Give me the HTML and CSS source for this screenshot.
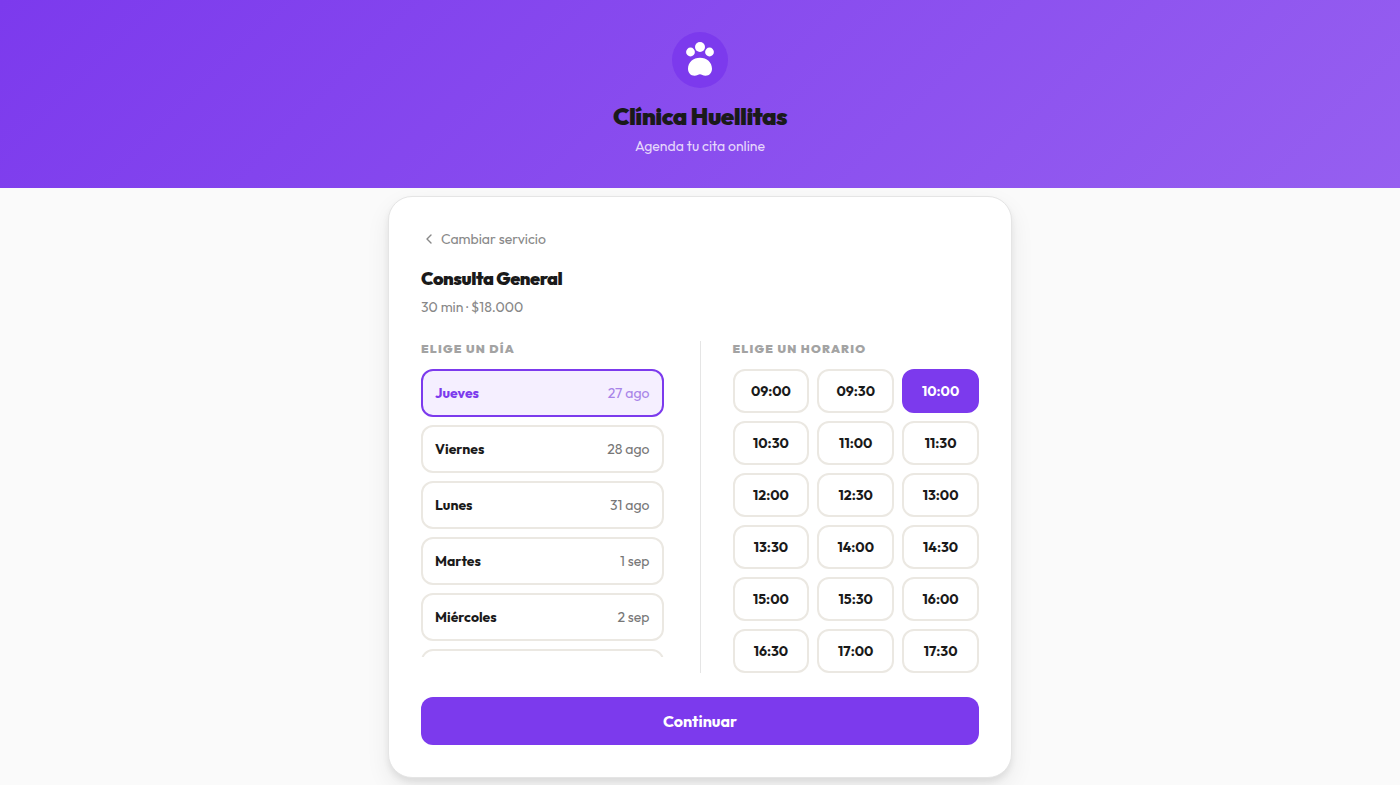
FILE: index.html
```html
<!DOCTYPE html>
<html lang="es">
<head>
<meta charset="UTF-8">
<meta name="viewport" content="width=device-width, initial-scale=1.0">
<title>Clínica Huellitas</title>
<link rel="stylesheet" href="styles.css">
</head>
<body>
<header class="header">
    <svg class="logo" viewBox="0 0 56 56" aria-hidden="true">
        <circle cx="28" cy="28" r="28" fill="#7c3aed"/>
        <g fill="#fff">
            <circle cx="28" cy="15" r="5"/>
            <circle cx="18.5" cy="20" r="4.4"/>
            <circle cx="37.5" cy="20" r="4.4"/>
            <path d="M28 25.8C21.2 25.8 16 30.4 16 36.8C16 41 18.8 43.8 22.4 43.8C25.2 43.8 26.4 42.2 28 42.2C29.6 42.2 30.8 43.8 33.6 43.8C37.2 43.8 40 41 40 36.8C40 30.4 34.8 25.8 28 25.8Z"/>
        </g>
    </svg>
    <h1>Clínica Huellitas</h1>
    <p>Agenda tu cita online</p>
</header>

<main class="page">
    <div class="card">
        <button type="button" class="back">
            <svg viewBox="0 0 16 16" aria-hidden="true"><path d="M10 4L6 8l4 4"/></svg>
            Cambiar servicio
        </button>
        <h2>Consulta General</h2>
        <p class="details">30 min · $18.000</p>

        <div class="columns">
            <section class="days">
                <h3>Elige un día</h3>
                <div class="day-list">
                    <button type="button" class="day selected"><span>Jueves</span><small>27 ago</small></button>
                    <button type="button" class="day"><span>Viernes</span><small>28 ago</small></button>
                    <button type="button" class="day"><span>Lunes</span><small>31 ago</small></button>
                    <button type="button" class="day"><span>Martes</span><small>1 sep</small></button>
                    <button type="button" class="day"><span>Miércoles</span><small>2 sep</small></button>
                    <button type="button" class="day"><span>Jueves</span><small>3 sep</small></button>
                </div>
            </section>
            <div class="divider"></div>
            <section class="times">
                <h3>Elige un horario</h3>
                <div class="time-grid">
                    <button type="button" class="time">09:00</button>
                    <button type="button" class="time">09:30</button>
                    <button type="button" class="time selected">10:00</button>
                    <button type="button" class="time">10:30</button>
                    <button type="button" class="time">11:00</button>
                    <button type="button" class="time">11:30</button>
                    <button type="button" class="time">12:00</button>
                    <button type="button" class="time">12:30</button>
                    <button type="button" class="time">13:00</button>
                    <button type="button" class="time">13:30</button>
                    <button type="button" class="time">14:00</button>
                    <button type="button" class="time">14:30</button>
                    <button type="button" class="time">15:00</button>
                    <button type="button" class="time">15:30</button>
                    <button type="button" class="time">16:00</button>
                    <button type="button" class="time">16:30</button>
                    <button type="button" class="time">17:00</button>
                    <button type="button" class="time">17:30</button>
                </div>
            </section>
        </div>

        <button type="button" class="continue">Continuar</button>
    </div>
</main>

<script>
    // only one day and one time can be selected
    function selectable(selector) {
        let items = document.querySelectorAll(selector);
        items.forEach((item) => {
            item.onclick = () => {
                items.forEach((other) => other.classList.remove("selected"));
                item.classList.add("selected");
            }
        });
    }

    selectable(".day");
    selectable(".time");
</script>
</body>
</html>
```
FILE: styles.css
```css
* {
    box-sizing: border-box;
}

body {
    min-height: 100vh;
    margin: 0;
    background-color: #fafafa;
    color: #1a1a1a;
    font-family: Outfit, Lato, sans-serif;
    font-size: 14px;
    line-height: 20px;
}

h1, h2, h3, p {
    margin: 0;
}

h1, h2 {
    font-weight: 900;
    letter-spacing: -0.025em;
}

button {
    font: inherit;
    color: inherit;
    cursor: pointer;
}

.header {
    display: flex;
    flex-direction: column;
    align-items: center;
    padding: 32px 24px;
    background: linear-gradient(135deg, #7c3aed, #965ff0);
    text-align: center;
}
.logo {
    width: 56px;
    height: 56px;
    margin-bottom: 12px;
}
.header h1 {
    margin-bottom: 4px;
    font-size: 24px;
    line-height: 32px;
}
.header p {
    color: #e6d8fb;
}

.page {
    max-width: 672px;
    margin: 0 auto;
    padding: 8px 24px 0;
}
.card {
    padding: 32px;
    background-color: #fff;
    border: 1px solid #e5e5e5;
    border-radius: 24px;
    box-shadow: 0 10px 24px rgba(0, 0, 0, 0.07), 0 4px 6px rgba(0, 0, 0, 0.07);
}

.back {
    display: flex;
    align-items: center;
    gap: 4px;
    margin-bottom: 16px;
    padding: 0;
    border: none;
    background: none;
    color: #888;
}
.back svg {
    width: 16px;
    height: 16px;
    fill: none;
    stroke: currentColor;
    stroke-width: 1.4;
    stroke-linecap: round;
    stroke-linejoin: round;
}
.card h2 {
    margin-bottom: 4px;
    font-size: 18px;
    line-height: 28px;
}
.details {
    color: #888;
}

.columns {
    display: grid;
    grid-template-columns: 1fr 1px 1fr;
    margin: 24px 0;
}
.columns h3 {
    margin-bottom: 12px;
    color: #a3a3a3;
    font-size: 12px;
    font-weight: 900;
    line-height: 16px;
    letter-spacing: 0.1em;
    text-transform: uppercase;
}
.divider {
    background-color: #e5e5e5;
}
.days {
    padding-right: 32px;
}
.day-list {
    display: flex;
    flex-direction: column;
    gap: 8px;
    max-height: 288px;
    padding-right: 4px;
    overflow-y: auto;
    scrollbar-width: none;
}
.day {
    display: flex;
    flex-shrink: 0;
    justify-content: space-between;
    align-items: center;
    height: 48px;
    padding: 0 12px;
    background-color: #fff;
    border: 2px solid #ebe8e2;
    border-radius: 12px;
}
.day span {
    font-weight: 700;
}
.day small {
    color: #777;
    font-size: 14px;
}
.day.selected {
    background-color: #f5efff;
    border-color: #7c3aed;
    color: #7c3aed;
}
.day.selected small {
    color: #a884e8;
}

.times {
    padding-left: 32px;
}
.time-grid {
    display: grid;
    grid-template-columns: repeat(3, 1fr);
    gap: 8px;
}
.time {
    height: 44px;
    padding: 0;
    background-color: #fff;
    border: 2px solid #ebe8e2;
    border-radius: 12px;
    font-weight: 700;
}
.time.selected {
    background-color: #7c3aed;
    border-color: #7c3aed;
    color: #fff;
}

.continue {
    display: block;
    width: 100%;
    height: 48px;
    border: none;
    border-radius: 12px;
    background-color: #7c3aed;
    color: #fff;
    font-size: 16px;
    font-weight: 700;
}
.continue:hover {
    background-color: #6d28d9;
}

@media (max-width: 600px) {
    .columns {
        grid-template-columns: 1fr;
        gap: 24px;
    }
    .divider {
        display: none;
    }
    .days {
        padding-right: 0;
    }
    .times {
        padding-left: 0;
    }
}
```
